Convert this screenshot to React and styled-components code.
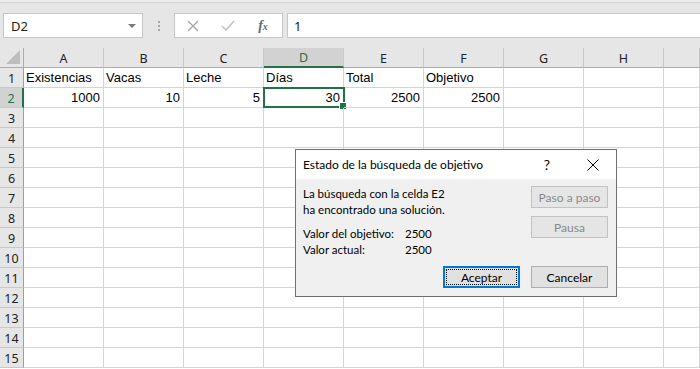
import React from 'react';
import styled, { createGlobalStyle } from 'styled-components';

const columns = ['A', 'B', 'C', 'D', 'E', 'F', 'G', 'H'];
const rows = [
  ['Existencias', 'Vacas', 'Leche', 'Días', 'Total', 'Objetivo'],
  [1000, 10, 5, 30, 2500, 2500],
];
const selected = { row: 2, col: 3 };
const rowCount = 15;

const GlobalStyle = createGlobalStyle`
  html, body {
    margin: 0;
    padding: 0;
    background: #fff;
  }
  body {
    width: 700px;
    height: 369px;
    overflow: hidden;
    font-family: "Liberation Sans", Arial, sans-serif;
  }
  * { box-sizing: border-box; }
`;

export default function App() {
  return (
    <Window>
      <GlobalStyle />
      <TopStrip />
      <Toolbar>
        <NameBox>
          D2
          <Caret />
        </NameBox>
        <Grip>
          <span />
          <span />
          <span />
        </Grip>
        <FxGroup>
          <ToolIcon>
            <svg width="12" height="12" viewBox="0 0 12 12">
              <path d="M1 1 L11 11 M11 1 L1 11" stroke="#a6a6a6" strokeWidth="1.3" fill="none" />
            </svg>
          </ToolIcon>
          <ToolIcon>
            <svg width="14" height="12" viewBox="0 0 14 12">
              <path d="M1 6 L5 10 L13 1" stroke="#c4c4c4" strokeWidth="1.6" fill="none" />
            </svg>
          </ToolIcon>
          <FxLabel>
            f<sub>x</sub>
          </FxLabel>
        </FxGroup>
        <FormulaInput>1</FormulaInput>
      </Toolbar>

      <Sheet>
        <Corner>
          <svg width="14" height="14" viewBox="0 0 14 14">
            <path d="M14 0 L14 14 L0 14 Z" fill="#bdbdbd" />
          </svg>
        </Corner>
        {columns.map((c, i) => (
          <ColHead key={c} active={i === selected.col}>
            {c}
          </ColHead>
        ))}
        <ColHead />

        {Array.from({ length: rowCount }, (_, r) => {
          const rowNo = r + 1;
          const data = rows[r] || [];
          return (
            <React.Fragment key={rowNo}>
              <RowHead active={rowNo === selected.row}>{rowNo}</RowHead>
              {columns.map((c, ci) => {
                const v = data[ci];
                return (
                  <Cell
                    key={c}
                    numeric={typeof v === 'number'}
                    selected={rowNo === selected.row && ci === selected.col}
                  >
                    {v}
                  </Cell>
                );
              })}
              <Cell />
            </React.Fragment>
          );
        })}
      </Sheet>

      <Dialog>
        <TitleBar>
          <Title>Estado de la búsqueda de objetivo</Title>
          <TitleButton>?</TitleButton>
          <TitleButton>
            <svg width="12" height="12" viewBox="0 0 12 12">
              <path d="M0.5 0.5 L11.5 11.5 M11.5 0.5 L0.5 11.5" stroke="#000" strokeWidth="1" fill="none" />
            </svg>
          </TitleButton>
        </TitleBar>
        <Body>
          <Content>
            <Message>
              <Line>La búsqueda con la celda E2</Line>
              <Line>ha encontrado una solución.</Line>
              <Values>
                <span>Valor del objetivo:</span>
                <span>2500</span>
                <span>Valor actual:</span>
                <span>2500</span>
              </Values>
            </Message>
            <SideButtons>
              <Button disabled>Paso a paso</Button>
              <Button disabled>Pausa</Button>
            </SideButtons>
          </Content>
          <Footer>
            <Button primary>
              <FocusRing>Aceptar</FocusRing>
            </Button>
            <Button>Cancelar</Button>
          </Footer>
        </Body>
      </Dialog>
    </Window>
  );
}

const Window = styled.div`
  position: relative;
  width: 700px;
  height: 369px;
  display: flex;
  flex-direction: column;
  overflow: hidden;
  background: #fff;
`;

const TopStrip = styled.div`
  height: 2px;
  background: #ececec;
`;

const Toolbar = styled.div`
  height: 46px;
  display: flex;
  align-items: flex-start;
  padding-top: 10px;
  background: #e6e6e6;
  border-top: 1px solid #d4d4d4;
  font-family: "Noto Sans", "Liberation Sans", sans-serif;
  font-size: 13px;
  color: #222;
`;

const NameBox = styled.div`
  position: relative;
  margin-left: 3px;
  width: 140px;
  height: 25px;
  display: flex;
  align-items: center;
  padding-left: 7px;
  background: #fff;
  border: 1px solid #c6c6c6;
`;

const Caret = styled.span`
  position: absolute;
  right: 6px;
  top: 10px;
  width: 0;
  height: 0;
  border-left: 4px solid transparent;
  border-right: 4px solid transparent;
  border-top: 4px solid #7a7a7a;
`;

const Grip = styled.div`
  width: 31px;
  height: 25px;
  display: flex;
  flex-direction: column;
  align-items: center;
  justify-content: center;
  gap: 2px;
  span {
    width: 2px;
    height: 2px;
    background: #a8a8a8;
  }
`;

const FxGroup = styled.div`
  width: 109px;
  height: 25px;
  display: flex;
  align-items: center;
  gap: 15px;
  padding-left: 8px;
  background: #fff;
  border: 1px solid #c6c6c6;
`;

const ToolIcon = styled.span`
  display: flex;
  width: 20px;
  justify-content: center;
`;

const FxLabel = styled.span`
  width: 20px;
  text-align: center;
  font-family: "Liberation Serif", serif;
  font-style: italic;
  font-weight: bold;
  font-size: 14px;
  color: #6a6a6a;
  sub {
    font-size: 10px;
    vertical-align: 0;
  }
`;

const FormulaInput = styled.div`
  flex: 1;
  margin-left: 4px;
  height: 25px;
  display: flex;
  align-items: center;
  padding-left: 6px;
  background: #fff;
  border: 1px solid #c6c6c6;
  border-right: none;
`;

const Sheet = styled.div`
  flex: 1;
  display: grid;
  grid-template-columns: 24px repeat(8, 80px) 1fr;
  grid-auto-rows: 20px;
  font-size: 13px;
`;

const Corner = styled.div`
  display: flex;
  align-items: flex-end;
  justify-content: flex-end;
  padding: 0 3px 3px 0;
  background: #e6e6e6;
  border-right: 1px solid #ababab;
  border-bottom: 1px solid #ababab;
`;

const ColHead = styled.div`
  display: flex;
  align-items: center;
  justify-content: center;
  padding-top: 1px;
  font-family: "Noto Sans", "Liberation Sans", sans-serif;
  font-size: 12.5px;
  color: ${p => (p.active ? '#217346' : '#222')};
  background: ${p => (p.active ? '#d2d2d2' : '#e6e6e6')};
  border-right: 1px solid #c8c8c8;
  border-bottom: ${p => (p.active ? '2px solid #217346' : '1px solid #ababab')};
`;

const RowHead = styled.div`
  display: flex;
  align-items: center;
  justify-content: center;
  padding-top: 1px;
  font-family: "Noto Sans", "Liberation Sans", sans-serif;
  font-size: 12.5px;
  color: ${p => (p.active ? '#217346' : '#222')};
  background: ${p => (p.active ? '#d2d2d2' : '#e6e6e6')};
  border-right: ${p => (p.active ? '2px solid #217346' : '1px solid #9e9e9e')};
  border-bottom: 1px solid #c8c8c8;
`;

const Cell = styled.div`
  position: relative;
  display: flex;
  align-items: flex-end;
  justify-content: ${p => (p.numeric ? 'flex-end' : 'flex-start')};
  padding: 0 3px 2px 2px;
  white-space: nowrap;
  color: #000;
  border-right: 1px solid #d4d4d4;
  border-bottom: 1px solid #d4d4d4;
  ${p =>
    p.selected &&
    `
    &::before {
      content: '';
      position: absolute;
      left: -1px;
      top: -1px;
      right: -2px;
      bottom: -1px;
      border: 2px solid #217346;
    }
    &::after {
      content: '';
      position: absolute;
      right: -4px;
      bottom: -3px;
      width: 6px;
      height: 6px;
      background: #217346;
      border: 1px solid #fff;
    }
  `}
`;

const Dialog = styled.div`
  position: absolute;
  left: 295px;
  top: 149px;
  width: 322px;
  height: 148px;
  display: flex;
  flex-direction: column;
  background: #f0f0f0;
  border: 1px solid #6f6f6f;
  font-family: Lato, "Noto Sans", sans-serif;
  font-size: 11.5px;
  color: #000;
`;

const TitleBar = styled.div`
  height: 29px;
  display: flex;
  align-items: center;
  padding-left: 7px;
  background: #fff;
  font-size: 12px;
`;

const Title = styled.span`
  flex: 1;
`;

const TitleButton = styled.span`
  width: 46px;
  display: flex;
  justify-content: center;
  font-size: 14px;
`;

const Body = styled.div`
  flex: 1;
  display: flex;
  flex-direction: column;
  padding: 7px 8px 8px 7px;
`;

const Content = styled.div`
  display: flex;
  justify-content: space-between;
`;

const Message = styled.div`
  display: flex;
  flex-direction: column;
`;

const Line = styled.div`
  line-height: 16px;
`;

const Values = styled.div`
  display: grid;
  grid-template-columns: 102px auto;
  grid-auto-rows: 16px;
  align-items: center;
  margin-top: 7px;
`;

const SideButtons = styled.div`
  display: flex;
  flex-direction: column;
  gap: 8px;
`;

const Button = styled.button`
  width: 77px;
  height: 22px;
  padding: 0;
  display: flex;
  align-items: center;
  justify-content: center;
  font-family: inherit;
  font-size: 12px;
  color: #000;
  background: #e1e1e1;
  border: 1px solid #adadad;
  &:disabled {
    color: #8a8a8a;
    background: #e5e5e5;
    border-color: #c2c2c2;
  }
  ${p =>
    p.primary &&
    `
    border: 2px solid #0078d7;
    padding: 1px;
  `}
`;

const FocusRing = styled.span`
  width: 100%;
  height: 100%;
  display: flex;
  align-items: center;
  justify-content: center;
  border: 1px dotted #000;
`;

const Footer = styled.div`
  margin-top: auto;
  display: flex;
  justify-content: flex-end;
  gap: 11px;
`;
